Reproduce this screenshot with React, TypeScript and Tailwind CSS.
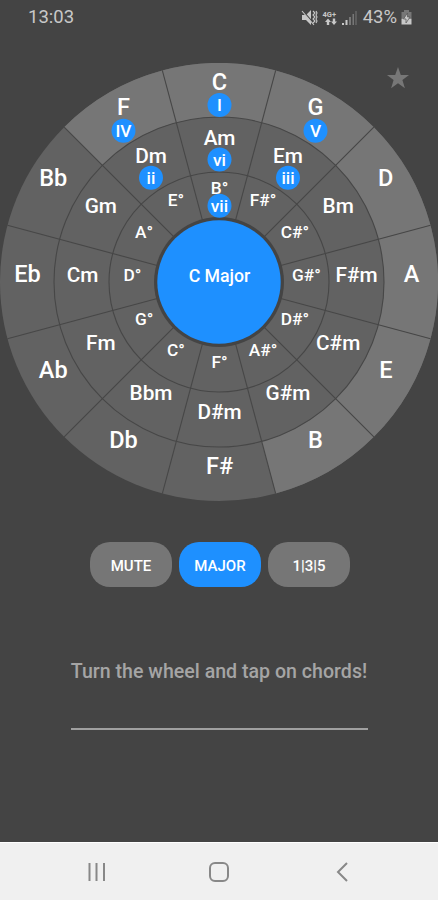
interface Chord {
  major: string;
  minor: string;
  dim: string;
  numerals?: string[];
  lit?: boolean;
}

// Clockwise from twelve o'clock
const CHORDS: Chord[] = [
  { major: 'C', minor: 'Am', dim: 'B°', numerals: ['I', 'vi', 'vii'], lit: true },
  { major: 'G', minor: 'Em', dim: 'F#°', numerals: ['V', 'iii'], lit: true },
  { major: 'D', minor: 'Bm', dim: 'C#°', lit: true },
  { major: 'A', minor: 'F#m', dim: 'G#°', lit: true },
  { major: 'E', minor: 'C#m', dim: 'D#°', lit: true },
  { major: 'B', minor: 'G#m', dim: 'A#°', lit: true },
  { major: 'F#', minor: 'D#m', dim: 'F°' },
  { major: 'Db', minor: 'Bbm', dim: 'C°' },
  { major: 'Ab', minor: 'Fm', dim: 'G°' },
  { major: 'Eb', minor: 'Cm', dim: 'D°' },
  { major: 'Bb', minor: 'Gm', dim: 'A°' },
  { major: 'F', minor: 'Dm', dim: 'E°', numerals: ['IV', 'ii'], lit: true },
];

const RINGS = [
  { radius: 192, size: 23.5, baseline: 7.5, badge: 23 },
  { radius: 137, size: 20.8, baseline: 7.5, badge: 22.5 },
  { radius: 87, size: 17.3, baseline: 7, badge: 18.8 },
];

const C = 219;

function polar(radius: number, degrees: number, cy = C) {
  const a = (degrees * Math.PI) / 180;
  return { x: C + radius * Math.sin(a), y: cy - radius * Math.cos(a) };
}

function ringSlice(outer: number, inner: number, start: number, end: number) {
  const a = polar(outer, start);
  const b = polar(outer, end);
  const c = polar(inner, end);
  const d = polar(inner, start);
  return `M${a.x} ${a.y}A${outer} ${outer} 0 0 1 ${b.x} ${b.y}L${c.x} ${c.y}A${inner} ${inner} 0 0 0 ${d.x} ${d.y}Z`;
}

function ChordWheel() {
  return (
    <svg className="block w-[438px] h-[438px]" viewBox="0 0 438 438" textAnchor="middle" fontWeight="500">
      <circle cx={C} cy={C} r="219" fill="#626262" />
      {CHORDS.map((chord, i) =>
        chord.lit ? (
          <path key={chord.major} d={ringSlice(219, 165, i * 30 - 15, i * 30 + 15)} fill="#767676" />
        ) : null
      )}
      <g stroke="#474747" strokeWidth="1.1" fill="none">
        <circle cx={C} cy={C} r="165" />
        <circle cx={C} cy={C} r="110" />
        {CHORDS.map((chord, i) => {
          const from = polar(62, i * 30 + 15);
          const to = polar(219, i * 30 + 15);
          return <line key={chord.major} x1={from.x} y1={from.y} x2={to.x} y2={to.y} />;
        })}
      </g>
      <circle cx={C} cy={C} r="65" fill="#444444" />
      <circle cx={C} cy={C} r="61.7" fill="#1e90ff" />
      {CHORDS.map((chord, i) =>
        [chord.major, chord.minor, chord.dim].map((name, ring) => {
          const { radius, size, baseline, badge } = RINGS[ring];
          const { x, y } = polar(radius, i * 30, 211);
          const numeral = chord.numerals?.[ring];
          return (
            <g key={name} fill="white">
              {numeral && <circle cx={x + 0.5} cy={y + badge} r="12" fill="#1e90ff" />}
              <text x={x + 0.5} y={y + baseline} fontSize={size}>
                {name}
              </text>
              {numeral && (
                <text x={x + 0.5} y={y + badge + 6} fontSize="17.3">
                  {numeral}
                </text>
              )}
            </g>
          );
        })
      )}
      <text x={C + 0.5} y="219" fontSize="17.7" fill="white">
        C Major
      </text>
    </svg>
  );
}

function StatusBar() {
  return (
    <div className="flex h-8 items-center justify-between pl-7 pr-[26px] pt-[3px] text-[18.5px] text-[#c8c8c8]">
      <span>13:03</span>
      <div className="flex items-center">
        <svg className="h-5 w-[57px]" viewBox="0 0 57 20" fill="#c8c8c8">
          <path d="M1 7h4l5-5v15l-5-5H1z" />
          <path d="M1 2l13 15" stroke="#444444" strokeWidth="1.5" />
          <path d="M1 3l12 14M12 3l2 2-2 2 2 2-2 2 2 2-2 2M15 3l1 2-1 2 1 2-1 2 1 2-1 2" fill="none" stroke="#c8c8c8" strokeWidth="1.1" />
          <text x="21.5" y="8.5" fontSize="7.5" fontWeight="700">4G+</text>
          <path d="M27 10.500l3 3.500h-1.800v3h-2.400v-3H24zM33 17l-3-3.500h1.800v-3h2.400v3H36z" />
          <path d="M41 15h2v2h-2zM44.500 12h2v5h-2z" />
          <path d="M48 9h2v8h-2zM51.500 6h1.500v11h-1.500zM54.500 3h1v14h-1z" fill="#777777" />
        </svg>
        <span className="ml-[5px]">43%</span>
        <svg className="ml-1 h-[17px] w-[11px]" viewBox="0 0 11 17">
          <path d="M3 1h5v2h2.500v6H.5V3H3z" fill="#777777" />
          <path d="M.5 9.500h10v6H.5z" fill="#c8c8c8" />
          <path d="M6.500 4L2.500 10h2.500v4l4-6H6.500z" fill="#c8c8c8" stroke="#555555" strokeWidth=".7" />
        </svg>
      </div>
    </div>
  );
}

function PillButton({ label, active }: { label: string; active?: boolean }) {
  return (
    <button
      className={`h-[45px] w-[82.500px] rounded-[20px] pt-[3px] text-[15px] font-medium text-white ${
        active ? 'bg-[#1e90ff]' : 'bg-[#767676]'
      }`}
    >
      {label}
    </button>
  );
}

export default function App() {
  return (
    <div className="flex h-[900px] w-[438px] flex-col overflow-hidden bg-[#444444] font-['Roboto',sans-serif]">
      <div className="relative">
        <StatusBar />
        <svg className="absolute left-[386px] top-[66px] h-6 w-6" viewBox="0 0 24 24" fill="#777777">
          <path d="M12 1l2.800 8h8.200l-6.600 5 2.500 8.200-6.900-5-6.900 5L7.600 14 1 9h8.200z" />
        </svg>
      </div>
      <div className="mt-[31px]">
        <ChordWheel />
      </div>
      <div className="mt-[41px] flex justify-center gap-[6.500px] pl-[2px]">
        <PillButton label="MUTE" />
        <PillButton label="MAJOR" active />
        <PillButton label="1|3|5" />
      </div>
      <div className="mx-auto mt-[70px] flex h-[73px] w-[297px] justify-center whitespace-nowrap border-b-2 border-[#a0a0a0] pt-px text-[19.600px] font-medium leading-[28px] text-[#a5a5a5]">
        Turn the wheel and tap on chords!
      </div>
      <div className="mt-auto flex h-[58px] items-center justify-center border-t border-white bg-[#f0f0f0]">
        <svg className="h-[22px] w-[270px]" viewBox="0 0 270 22" fill="none" stroke="#888888" strokeWidth="2">
          <path d="M5.500 2v18M12.500 2v18M20 2v18" />
          <rect x="126" y="2" width="18" height="18" rx="5" />
          <path d="M263 2l-9 9 9 9" />
        </svg>
      </div>
    </div>
  );
}
